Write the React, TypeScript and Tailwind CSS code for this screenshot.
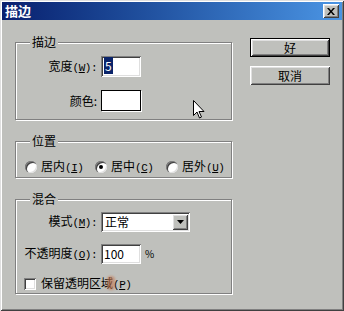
const raised =
  "shadow-[inset_1px_1px_0_#fff,inset_-1px_-1px_0_#404040,inset_2px_2px_0_#dfdfdf,inset_-2px_-2px_0_#808080]";
const sunken =
  "shadow-[inset_1px_1px_0_#808080,inset_-1px_-1px_0_#fff,inset_2px_2px_0_#404040,inset_-2px_-2px_0_#dfdfdf]";

// half-width latin part of a label, e.g. "(W):"
function Key({ c, colon }: { c: string; colon?: boolean }) {
  return (
    <span className="font-['Liberation_Mono',monospace] text-[11px] tracking-[-0.5px]">
      (<span className="underline underline-offset-1">{c}</span>){colon ? ":" : ""}
    </span>
  );
}

function Group({ title, className, children }: { title: string; className: string; children: React.ReactNode }) {
  return (
    <div
      className={
        "relative border border-[#808080] shadow-[inset_1px_1px_0_#fff,1px_1px_0_#fff] " + className
      }
    >
      <span className="absolute left-[14px] top-[-9px] bg-[#bfc0bc] px-[2px] leading-[16px]">{title}</span>
      {children}
    </div>
  );
}

function Radio({ checked }: { checked?: boolean }) {
  return (
    <span className="flex h-[12px] w-[12px] items-center justify-center rounded-full bg-white shadow-[inset_1px_1px_0_#808080,inset_2px_2px_0_#404040,inset_-1px_-1px_0_#dfdfdf]">
      {checked && <span className="h-[4px] w-[4px] rounded-full bg-black" />}
    </span>
  );
}

export default function App() {
  return (
    <div className="relative h-[311px] w-[344px] overflow-hidden bg-[#bfc0bc] p-[2px] font-['Noto_Sans_CJK_SC',sans-serif] text-[12px] leading-[14px] text-black shadow-[inset_1px_1px_0_#dfdfdf,inset_-1px_-1px_0_#404040,inset_2px_2px_0_#fff,inset_-2px_-2px_0_#808080]">
      {/* title bar */}
      <div className="flex h-[18px] items-center justify-between bg-linear-to-r from-[#0a1f6e] to-[#4b95e4] pl-[3px] pr-[3px]">
        <span className="text-[13px] font-bold text-white">描边</span>
        <button className={"flex h-[14px] w-[16px] items-center justify-center bg-[#bfc0bc] " + raised}>
          <svg width="8" height="7" viewBox="0 0 8 7">
            <path d="M0 0h2l2 2.5L6 0h2L5 3.5 8 7H6L4 4.5 2 7H0l3-3.5z" fill="#000" />
          </svg>
        </button>
      </div>

      <div className="flex pl-[13px]">
        {/* left column */}
        <div className="flex w-[217px] flex-col gap-[21px] pt-[22px]">
          <Group title="描边" className="h-[78px]">
            <div className="flex flex-col gap-[13px] pt-[13px]">
              <div className="flex items-center">
                <span className="w-[81px] text-right">
                  宽度<Key c="W" colon />
                </span>
                <div className={"ml-[4px] h-[21px] w-[40px] bg-white pl-[3px] pt-[3px] " + sunken}>
                  <span className="bg-[#0a246a] px-[1px] text-white">5</span>
                </div>
              </div>
              <div className="flex items-center">
                <span className="w-[81px] text-right">颜色:</span>
                <div className="ml-[4px] h-[21px] w-[40px] border border-black bg-white shadow-[1px_1px_0_#fff]" />
              </div>
            </div>
          </Group>

          <Group title="位置" className="h-[37px]">
            <div className="flex items-center pl-[9px] pt-[17px]">
              <label className="flex w-[70px] items-center gap-[4px]">
                <Radio />
                <span>
                  居内<Key c="I" />
                </span>
              </label>
              <label className="flex w-[71px] items-center gap-[4px]">
                <Radio checked />
                <span>
                  居中<Key c="C" />
                </span>
              </label>
              <label className="flex items-center gap-[4px]">
                <Radio />
                <span>
                  居外<Key c="U" />
                </span>
              </label>
            </div>
          </Group>

          <Group title="混合" className="h-[95px]">
            <div className="flex flex-col pt-[12px]">
              <div className="flex items-center">
                <span className="w-[81px] text-right">
                  模式<Key c="M" colon />
                </span>
                <div className={"ml-[4px] flex h-[20px] w-[89px] items-center justify-between bg-white pl-[4px] pr-[2px] " + sunken}>
                  <span>正常</span>
                  <span className={"flex h-[16px] w-[16px] items-center justify-center bg-[#bfc0bc] " + raised}>
                    <svg width="7" height="4" viewBox="0 0 7 4">
                      <path d="M0 0h7L3.5 4z" fill="#000" />
                    </svg>
                  </span>
                </div>
              </div>
              <div className="mt-[12px] flex items-center">
                <span className="w-[81px] whitespace-nowrap text-right">
                  不透明度<Key c="O" colon />
                </span>
                <div className={"ml-[4px] flex h-[20px] w-[40px] items-center bg-white pl-[3px] " + sunken}>
                  100
                </div>
                <span className="ml-[4px] text-[10px]">%</span>
              </div>
              <label className="mt-[12px] flex items-center gap-[5px] pl-[8px]">
                <span className={"h-[12px] w-[12px] bg-white " + sunken} />
                <span>
                  保留透明区域<Key c="P" />
                </span>
              </label>
            </div>
          </Group>
        </div>

        {/* right column */}
        <div className="ml-[18px] flex flex-col gap-[9px] pt-[18px]">
          <button className={"h-[19px] w-[80px] border border-black bg-[#bfc0bc] " + raised}>好</button>
          <button className={"h-[19px] w-[80px] bg-[#bfc0bc] " + raised}>取消</button>
        </div>
      </div>

      {/* mouse cursor */}
      <svg className="absolute left-[193px] top-[100px]" width="12" height="19" viewBox="0 0 12 19">
        <path d="M0.5 0.5v15l3.5-3.5 2.5 6 2-1-2.5-5.5h5z" fill="#fff" stroke="#000" strokeWidth="1" />
      </svg>
      {/* smudge over the checkbox label */}
      <span className="absolute left-[107px] top-[276px] h-[14px] w-[8px] rounded-full bg-[#c87850] opacity-60 blur-[1px]" />
    </div>
  );
}
